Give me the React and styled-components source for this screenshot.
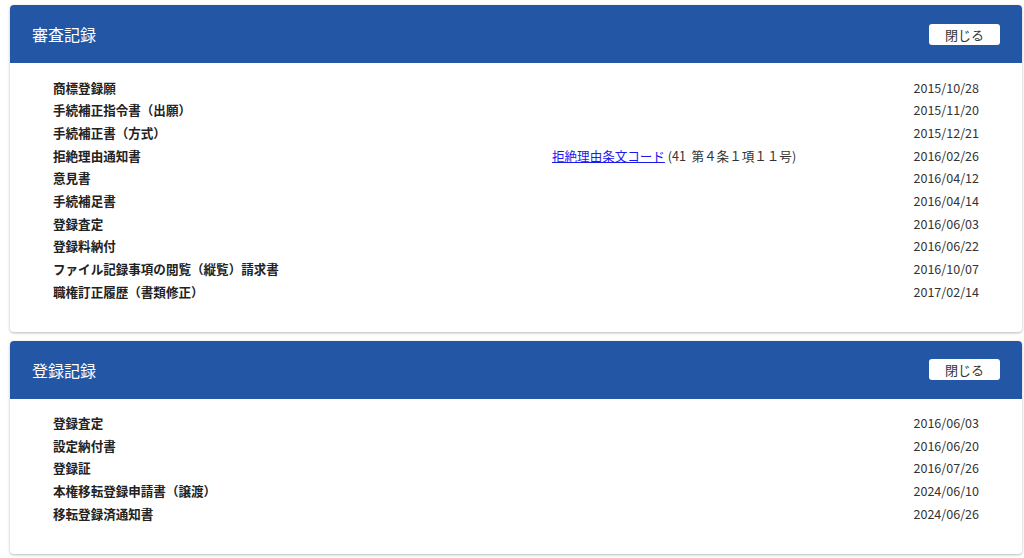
import styled, { createGlobalStyle } from 'styled-components';

const GlobalStyles = createGlobalStyle`
	html, body {
		margin: 0;
		padding: 0;
		background: #ffffff;
	}
	body {
		font-family: 'Noto Sans CJK JP', 'Noto Sans', sans-serif;
		color: #333;
	}
`;

const Page = styled.div`
	padding: 5px 2px 5px 10px;
	display: flex;
	flex-direction: column;
	gap: 9px;
`;

const Card = styled.section`
	background: #fff;
	border-radius: 4px;
	box-shadow: 0 1px 3px rgba(0, 0, 0, 0.28);
	overflow: hidden;
`;

const Header = styled.header`
	height: 58px;
	background: #2356a5;
	display: flex;
	align-items: center;
	justify-content: space-between;
	padding: 0 22px;
	box-sizing: border-box;
	& h2 {
		margin: 0;
		color: #fff;
		font-size: 16px;
		font-weight: 400;
	}
`;

const CloseButton = styled.button`
	width: 71px;
	height: 21px;
	background: #fff;
	border: none;
	border-radius: 3px;
	font-family: 'Noto Sans CJK JP', sans-serif;
	font-size: 13px;
	color: #333;
	padding: 0;
	cursor: pointer;
`;

const Body = styled.div`
	padding: 13.5px 43px 28px 43px;
`;

const Row = styled.div`
	display: grid;
	grid-template-columns: 499px 1fr auto;
	font-size: 12.55px;
	line-height: 22.7px;
	.label {
		font-weight: 700;
		color: #222;
	}
	.code {
		color: #333;
	}
	.code a {
		color: #1a1aee;
		text-decoration: underline;
	}
	.date {
		text-align: right;
		color: #333;
	}
`;

const examRecords = [
	['商標登録願', '2015/10/28'],
	['手続補正指令書（出願）', '2015/11/20'],
	['手続補正書（方式）', '2015/12/21'],
	['拒絶理由通知書', '2016/02/26', true],
	['意見書', '2016/04/12'],
	['手続補足書', '2016/04/14'],
	['登録査定', '2016/06/03'],
	['登録料納付', '2016/06/22'],
	['ファイル記録事項の閲覧（縦覧）請求書', '2016/10/07'],
	['職権訂正履歴（書類修正）', '2017/02/14'],
];

const regRecords = [
	['登録査定', '2016/06/03'],
	['設定納付書', '2016/06/20'],
	['登録証', '2016/07/26'],
	['本権移転登録申請書（譲渡）', '2024/06/10'],
	['移転登録済通知書', '2024/06/26'],
];

const RecordCard = ({ title, records }) => (
	<Card>
		<Header>
			<h2>{title}</h2>
			<CloseButton>閉じる</CloseButton>
		</Header>
		<Body>
			{records.map(([label, date, code]) => (
				<Row key={label + date}>
					<span className="label">{label}</span>
					<span className="code">
						{code && (
							<>
								<a href="#">拒絶理由条文コード</a> (41{'\u00a0\u00a0'}第４条１項１１号)
							</>
						)}
					</span>
					<span className="date">{date}</span>
				</Row>
			))}
		</Body>
	</Card>
);

const App = () => (
	<>
		<GlobalStyles />
		<Page>
			<RecordCard title="審査記録" records={examRecords} />
			<RecordCard title="登録記録" records={regRecords} />
		</Page>
	</>
);

export default App;
